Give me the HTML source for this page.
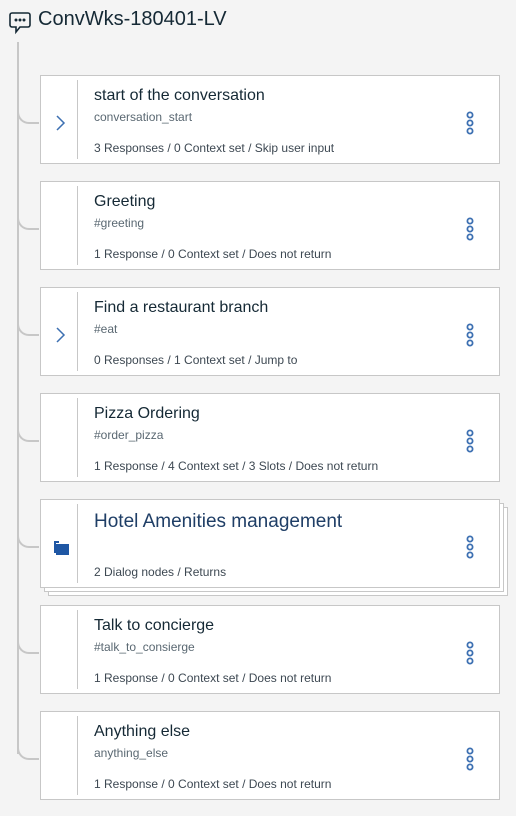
<!DOCTYPE html>
<html><head><style>
body{margin:0;width:516px;height:816px;background:#f4f4f4;font-family:"Liberation Sans",sans-serif;position:relative;overflow:hidden;color:#152935}
.hdr{position:absolute;left:38px;top:8px;font-size:20px;color:#152935}
.vline{position:absolute;left:17px;top:42px;width:2px;height:712px;background:#c7c7c7}
.br{position:absolute;left:17px;width:22px;height:30px;border-left:2px solid #c7c7c7;border-bottom:2px solid #c7c7c7;border-bottom-left-radius:12px;box-sizing:border-box}
.card{position:absolute;left:40px;width:460px;height:89px;background:#fff;border:1px solid #c7c7c7;box-sizing:border-box}
.card .div{position:absolute;left:36px;top:4px;bottom:4px;width:1px;background:#c7c7c7}
.t{position:absolute;left:53px;top:11px;font-size:16px;color:#152935}
.s{position:absolute;left:53px;top:34px;font-size:12px;color:#5a6872}
.st{position:absolute;left:53px;top:65px;font-size:12px;color:#3d4852}
.dots{position:absolute;left:424px;top:35px}
.chev{position:absolute;left:12px;top:37px}
.stack{position:absolute;width:460px;height:89px;background:#fff;border:1px solid #c7c7c7;box-sizing:border-box}
</style></head><body>
<svg style="position:absolute;left:8px;top:11px" width="24" height="24" viewBox="0 0 24 24" fill="none" stroke="#152935" stroke-width="1.6"><path d="M4 2h16a2 2 0 0 1 2 2v10a2 2 0 0 1-2 2h-8l-4 5v-5H4a2 2 0 0 1-2-2V4a2 2 0 0 1 2-2z"/><circle cx="8" cy="9" r=".7" fill="#152935"/><circle cx="12" cy="9" r=".7" fill="#152935"/><circle cx="16" cy="9" r=".7" fill="#152935"/></svg>
<div class="hdr">ConvWks-180401-LV</div>
<div class="vline"></div>
<div class="br" style="top:94px"></div>
<div class="br" style="top:200px"></div>
<div class="br" style="top:306px"></div>
<div class="br" style="top:412px"></div>
<div class="br" style="top:518px"></div>
<div class="br" style="top:624px"></div>
<div class="br" style="top:730px"></div>

<div class="card" style="top:75px"><div class="div"></div>
<svg class="chev" width="14" height="20"><path d="M4 3l7 7-7 7" fill="none" stroke="#3d70b2" stroke-width="1.5"/></svg>
<div class="t">start of the conversation</div><div class="s">conversation_start</div><div class="st">3 Responses / 0 Context set / Skip user input</div>
<svg class="dots" width="10" height="26"><g fill="none" stroke="#3d70b2" stroke-width="1.8"><circle cx="5" cy="4" r="2.6"/><circle cx="5" cy="12" r="2.6"/><circle cx="5" cy="20" r="2.6"/></g></svg></div>

<div class="card" style="top:181px"><div class="div"></div>
<div class="t">Greeting</div><div class="s">#greeting</div><div class="st">1 Response / 0 Context set / Does not return</div>
<svg class="dots" width="10" height="26"><g fill="none" stroke="#3d70b2" stroke-width="1.8"><circle cx="5" cy="4" r="2.6"/><circle cx="5" cy="12" r="2.6"/><circle cx="5" cy="20" r="2.6"/></g></svg></div>

<div class="card" style="top:287px"><div class="div"></div>
<svg class="chev" width="14" height="20"><path d="M4 3l7 7-7 7" fill="none" stroke="#3d70b2" stroke-width="1.5"/></svg>
<div class="t">Find a restaurant branch</div><div class="s">#eat</div><div class="st">0 Responses / 1 Context set / Jump to</div>
<svg class="dots" width="10" height="26"><g fill="none" stroke="#3d70b2" stroke-width="1.8"><circle cx="5" cy="4" r="2.6"/><circle cx="5" cy="12" r="2.6"/><circle cx="5" cy="20" r="2.6"/></g></svg></div>

<div class="card" style="top:393px"><div class="div"></div>
<div class="t">Pizza Ordering</div><div class="s">#order_pizza</div><div class="st">1 Response / 4 Context set / 3 Slots / Does not return</div>
<svg class="dots" width="10" height="26"><g fill="none" stroke="#3d70b2" stroke-width="1.8"><circle cx="5" cy="4" r="2.6"/><circle cx="5" cy="12" r="2.6"/><circle cx="5" cy="20" r="2.6"/></g></svg></div>

<div class="stack" style="left:48px;top:507px"></div>
<div class="stack" style="left:44px;top:503px"></div>
<div class="card" style="top:499px"><div class="div"></div>
<svg style="position:absolute;left:12px;top:40px" width="16" height="16"><path d="M1 1h5v2H1z" fill="#1f57a4"/><path d="M1 3h2v10H1z" fill="#1f57a4"/><rect x="3" y="4" width="13" height="11" fill="#1f57a4"/></svg>
<div class="t" style="font-size:19px;top:11px;color:#1f3e66">Hotel Amenities management</div><div class="st">2 Dialog nodes / Returns</div>
<svg class="dots" width="10" height="26"><g fill="none" stroke="#3d70b2" stroke-width="1.8"><circle cx="5" cy="4" r="2.6"/><circle cx="5" cy="12" r="2.6"/><circle cx="5" cy="20" r="2.6"/></g></svg></div>

<div class="card" style="top:605px"><div class="div"></div>
<div class="t">Talk to concierge</div><div class="s">#talk_to_consierge</div><div class="st">1 Response / 0 Context set / Does not return</div>
<svg class="dots" width="10" height="26"><g fill="none" stroke="#3d70b2" stroke-width="1.8"><circle cx="5" cy="4" r="2.6"/><circle cx="5" cy="12" r="2.6"/><circle cx="5" cy="20" r="2.6"/></g></svg></div>

<div class="card" style="top:711px"><div class="div"></div>
<div class="t">Anything else</div><div class="s">anything_else</div><div class="st">1 Response / 0 Context set / Does not return</div>
<svg class="dots" width="10" height="26"><g fill="none" stroke="#3d70b2" stroke-width="1.8"><circle cx="5" cy="4" r="2.6"/><circle cx="5" cy="12" r="2.6"/><circle cx="5" cy="20" r="2.6"/></g></svg></div>
</body></html>
